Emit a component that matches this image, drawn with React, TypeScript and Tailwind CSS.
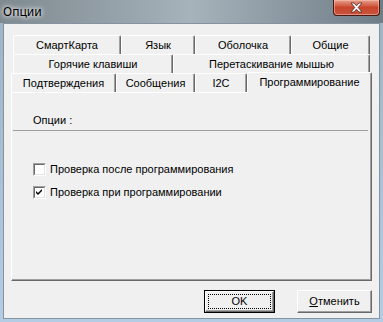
import React from "react";

const font = { fontFamily: '"Liberation Sans", Arial, sans-serif' };

function Tab({ w, label, selected }: { w: number; label: string; selected?: boolean }) {
  if (selected) {
    return (
      <div
        className="relative z-10 -mt-[2px] h-[21px] flex items-center justify-center bg-[#f0f0f0] border-t border-l border-white border-r border-r-[#696969] rounded-t-[2px] shadow-[inset_-1px_0_0_#a0a0a0] text-[11px] text-black -mb-[1px] pb-[2px]"
        style={{ width: w }}
      >
        {label}
      </div>
    );
  }
  return (
    <div
      className="h-[19px] flex items-center justify-center bg-[#f0f0f0] border-t border-l border-white border-r border-r-[#696969] rounded-t-[2px] shadow-[inset_-1px_0_0_#a0a0a0] text-[11px] text-black"
      style={{ width: w }}
    >
      {label}
    </div>
  );
}

function Checkbox({ checked }: { checked?: boolean }) {
  return (
    <div className="w-[13px] h-[13px] border-t border-l border-t-[#a0a0a0] border-l-[#a0a0a0] border-b border-r border-b-white border-r-white">
      <div className="w-full h-full border-t border-l border-t-[#696969] border-l-[#696969] border-b border-r border-b-[#e3e3e3] border-r-[#e3e3e3] bg-white flex items-center justify-center">
        {checked && (
          <svg width="7" height="7" viewBox="0 0 7 7">
            <path d="M0 2 L2 4 L6 0 L6 2 L2 6 L0 4 Z" fill="#000" />
          </svg>
        )}
      </div>
    </div>
  );
}

export default function App() {
  return (
    <div
      className="w-[383px] h-[322px] flex flex-col bg-gradient-to-b from-[#8d9aa3] to-[#a9c3dc] overflow-hidden"
      style={font}
    >
      {/* title bar */}
      <div className="h-[23px] flex items-start bg-gradient-to-r from-[#7f8990] via-[#a6b3bb] to-[#6f7d87] relative">
        <div
          className="ml-[3px] mt-[3px] text-[12px] text-black"
          style={{ fontFamily: '"Noto Sans", "Liberation Sans", sans-serif', textShadow: "0 0 6px #ffffff, 0 0 4px #ffffff" }}
        >
          Опции
        </div>
        <div className="flex-1" />
        <div className="mr-[3px] w-[47px] h-[16px] rounded-b-[4px] border border-t-0 border-[#4a1810] bg-gradient-to-b from-[#e6a08c] via-[#c9442a] to-[#c5563e] flex items-center justify-center shadow-[inset_0_0_0_1px_rgba(255,200,190,0.5)]">
          <svg width="13" height="11" viewBox="0 0 13 11">
            <path d="M1 1 L4 1 L6.5 3.8 L9 1 L12 1 L8.2 5.5 L12 10 L9 10 L6.5 7.2 L4 10 L1 10 L4.8 5.5 Z" fill="#fff" stroke="#4a2a25" strokeWidth="0.8" />
          </svg>
        </div>
      </div>

      {/* frame + client */}
      <div className="flex-1 flex px-[3px] pb-[3px] bg-gradient-to-b from-[#9fb4c5] to-[#b4cde4]">
        <div className="flex-1 flex flex-col bg-[#f0f0f0] border border-[#8593a0]">
          {/* tabs */}
          <div className="mt-[11px] flex flex-col">
            <div className="flex ml-[9px]">
              <Tab w={108} label="СмартКарта" />
              <Tab w={74} label="Язык" />
              <Tab w={96} label="Оболочка" />
              <Tab w={79} label="Общие" />
            </div>
            <div className="flex ml-[9px]">
              <Tab w={160} label="Горячие клавиши" />
              <Tab w={197} label="Перетаскивание мышью" />
            </div>
            <div className="flex ml-[7px] items-end h-[19px]">
              <Tab w={105} label="Подтверждения" />
              <Tab w={79} label="Сообщения" />
              <Tab w={52} label="I2C" />
              <Tab w={125} label="Программирование" selected />
            </div>
          </div>

          {/* panel */}
          <div className="ml-[7px] w-[361px] h-[189px] border-t border-l border-white border-r border-b border-r-[#696969] border-b-[#696969] shadow-[inset_-1px_-1px_0_#a0a0a0] flex flex-col text-[11px] text-black">
            <div className="ml-[21px] mt-[20px] h-[14px] leading-[14px]">Опции :</div>
            <div className="ml-[1px] mr-[3px] mt-[3px] h-px bg-[#a0a0a0]" />
            <div className="mt-[32px] ml-[21px] flex items-center gap-[4px] h-[13px]">
              <Checkbox />
              <span>Проверка после программирования</span>
            </div>
            <div className="mt-[10px] ml-[21px] flex items-center gap-[4px] h-[13px]">
              <Checkbox checked />
              <span>Проверка при программировании</span>
            </div>
          </div>

          {/* buttons */}
          <div className="flex justify-end mt-[9px] mr-[7px] gap-[22px] text-[11px] text-black">
            <div className="w-[71px] h-[23px] border border-black">
              <div className="w-full h-full border-t border-l border-white border-r border-b border-r-[#696969] border-b-[#696969] shadow-[inset_-1px_-1px_0_#a0a0a0] bg-[#f0f0f0] p-[2px]">
                <div className="w-full h-full border border-dotted border-black flex items-center justify-center">
                  OK
                </div>
              </div>
            </div>
            <div className="w-[75px] h-[23px] border-t border-l border-white border-r border-b border-r-[#696969] border-b-[#696969] shadow-[inset_-1px_-1px_0_#a0a0a0] bg-[#f0f0f0] flex items-center justify-center">
              <span>
                <span className="underline">О</span>тменить
              </span>
            </div>
          </div>
        </div>
      </div>
    </div>
  );
}
